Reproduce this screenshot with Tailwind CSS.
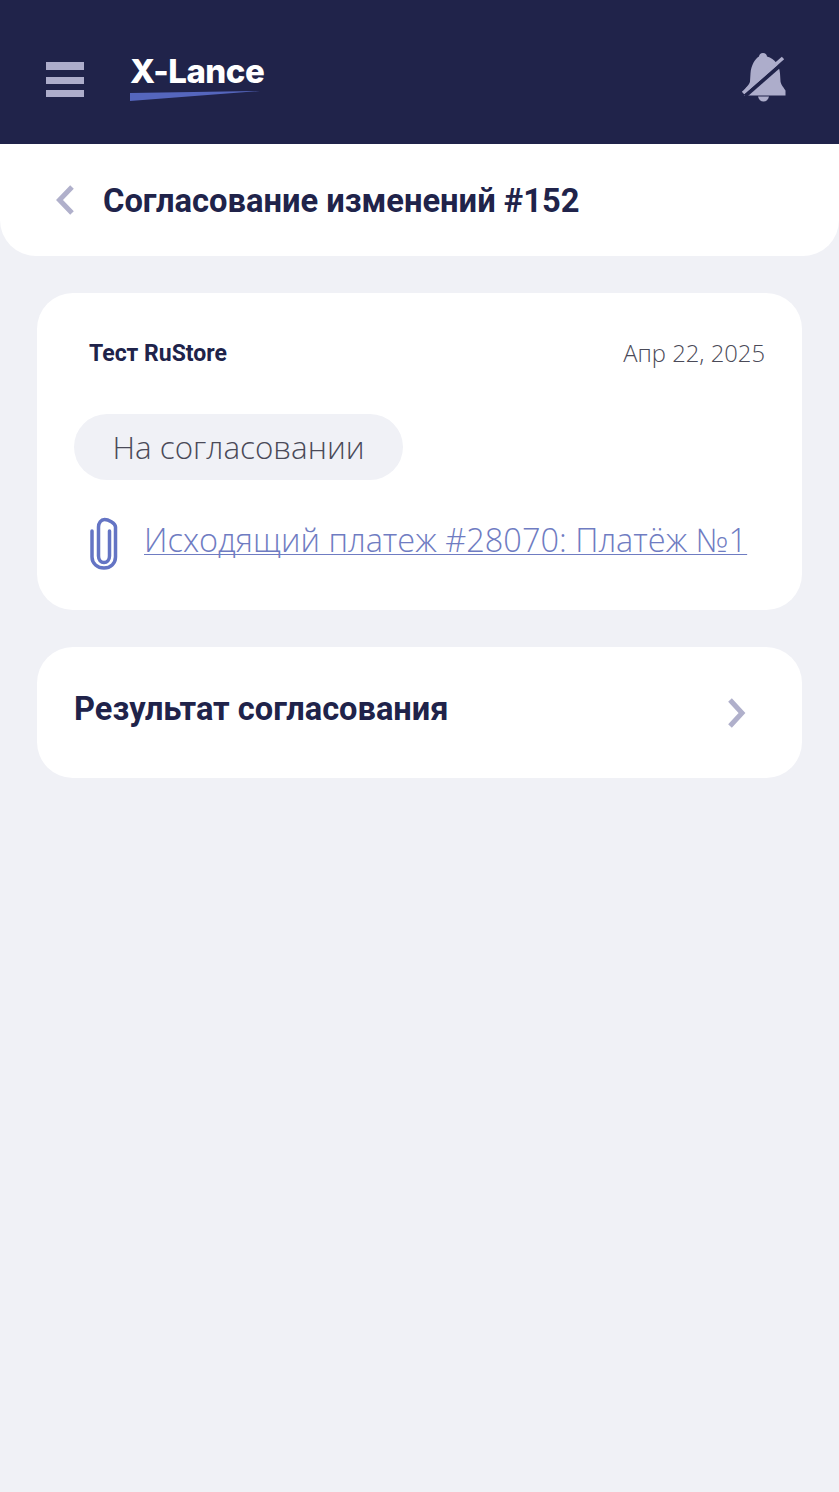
<!DOCTYPE html>
<html lang="ru">
<head>
<meta charset="utf-8">
<script src="https://cdn.jsdelivr.net/npm/@tailwindcss/browser@4"></script>
</head>
<body class="m-0 bg-[#f0f1f6] font-['Roboto',sans-serif]">
<div class="w-[839px] h-[1492px] overflow-hidden bg-[#f0f1f6] flex flex-col">
  <header class="h-[144px] bg-[#20234a] shrink-0 flex items-center pl-[46px] pr-[52px]">
    <div class="flex flex-col gap-[6.5px] w-[38px] mt-[15px]">
      <span class="block h-[8px] bg-[#adadcb]"></span>
      <span class="block h-[7px] bg-[#adadcb]"></span>
      <span class="block h-[7px] bg-[#adadcb]"></span>
    </div>
    <div class="ml-[46px] w-[136px] mt-[10px]">
      <div class="font-['Inter',sans-serif] font-extrabold text-[33px] leading-[36px] tracking-[-0.5px] text-white">X-Lance</div>
      <svg class="block mt-[1px]" width="136" height="12" viewBox="0 0 136 12"><polygon points="0,3 130,1 0,11" fill="#5566bd"/></svg>
    </div>
    <svg class="ml-auto mt-[10px]" width="46" height="52" viewBox="0 0 46 52">
      <path d="M22 2a4 4 0 0 1 4 3.500c8 2 12.500 9 13 17l.5 8c.5 3 2 4.500 5 9v5H3v-5c3-4.500 5.500-6 6-9l.5-8c.5-8 4.500-15 8.500-17a4 4 0 0 1 4-3.500z" fill="#adadcb"/>
      <path d="M17 45.500h11c-.7 3-2.700 5-5.500 5s-4.800-2-5.500-5z" fill="#adadcb"/>
      <path d="M44 10 4 45" stroke="#20234a" stroke-width="4" fill="none"/>
      <path d="M42 7 2 42" stroke="#adadcb" stroke-width="3.500" fill="none"/>
    </svg>
  </header>

  <section class="h-[112px] shrink-0 bg-white rounded-b-[36px] flex items-center pl-[55px]">
    <svg width="20" height="32" viewBox="0 0 20 32" class="shrink-0"><path d="M17 3 4.500 16 17 29" fill="none" stroke="#b0b0cb" stroke-width="5"/></svg>
    <h1 class="ml-[28px] mt-[1px] text-[32.700px] leading-[40px] font-bold text-[#20234a]">Согласование изменений #152</h1>
  </section>

  <main class="flex flex-col gap-[37px] px-[37px] pt-[37px]">
    <section class="h-[317px] bg-white rounded-[36px] pl-[37px] pr-[37px] pt-[46px]">
      <div class="flex items-center justify-between pl-[15px] h-[30px]">
        <span class="text-[23px] font-bold text-[#20234a] mt-[1px]">Тест RuStore</span>
        <span class="font-['Open_Sans',sans-serif] font-light text-[23.800px] text-[#4a4a58] mt-[-1px]">Апр 22, 2025</span>
      </div>
      <div class="mt-[45px] w-[329px] h-[66px] rounded-full bg-[#f0f1f6] flex items-center justify-center font-['Open_Sans',sans-serif] font-light text-[31.400px] text-[#4a4a58]">На согласовании</div>
      <div class="mt-[30px] flex items-center pl-[15px]">
        <svg width="30" height="54" viewBox="0 0 30 54" class="shrink-0 mt-[6px]"><path d="M20.500 15v25c0 4-2.500 6.500-5.500 6.500S9.500 44 9.500 40V11c0-4 2.500-7.500 6-7.500S26.500 7 26.500 11v30c0 6.500-5 11-11.500 11S3 47.500 3 41V15" fill="none" stroke="#6474c4" stroke-width="3.500" stroke-linecap="round"/></svg>
        <a class="ml-[25px] font-['Open_Sans',sans-serif] font-light text-[32.500px] leading-[44px] text-[#6f7cc2] underline decoration-1 decoration-[#6f7cc2] underline-offset-[2px] [text-decoration-skip-ink:none] whitespace-nowrap">Исходящий платеж #28070: Платёж №1</a>
      </div>
    </section>
    <section class="h-[131px] bg-white rounded-[36px] flex items-center justify-between pl-[37px] pr-[54px]">
      <h2 class="text-[32.600px] leading-[40px] font-bold text-[#20234a] mb-[8px]">Результат согласования</h2>
      <svg width="22" height="32" viewBox="0 0 22 32" class="shrink-0"><path d="M4 3 16 16 4 29" fill="none" stroke="#b0b0cb" stroke-width="5"/></svg>
    </section>
  </main>
</div>
</body>
</html>
